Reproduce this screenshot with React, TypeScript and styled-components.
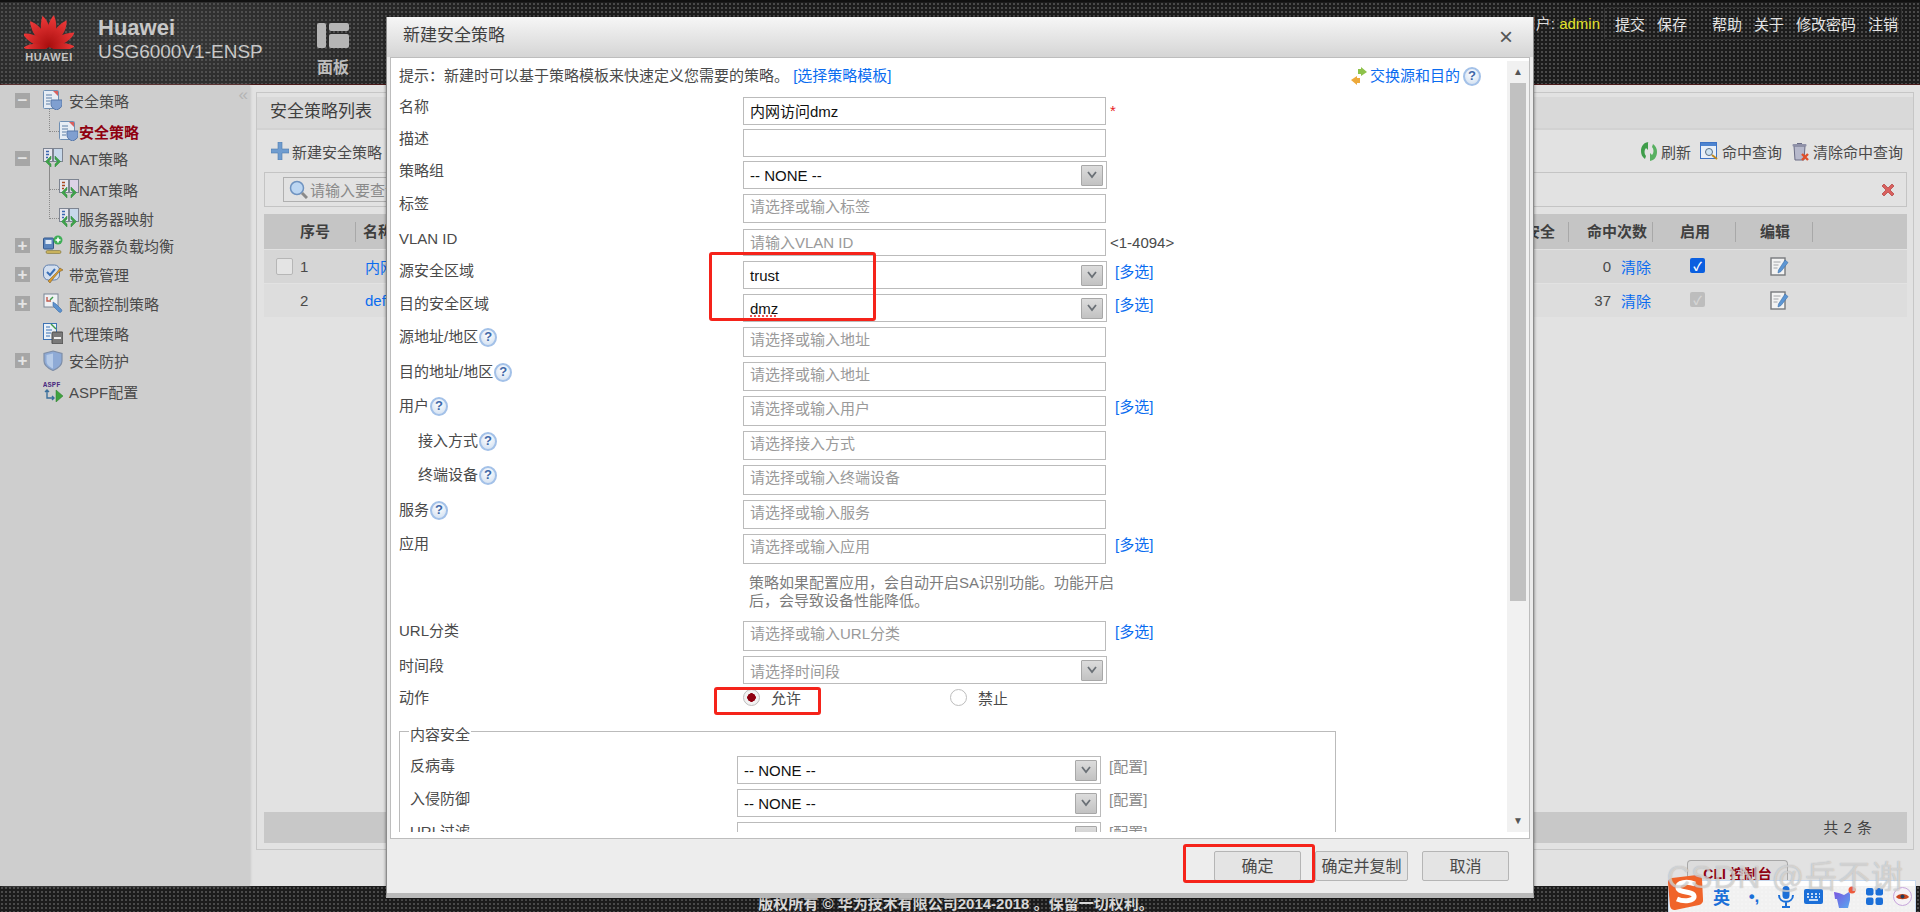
import React from 'react'
import { createGlobalStyle, styled } from 'styled-components'

const FONT = `"Liberation Sans", "Noto Sans CJK SC", sans-serif`

const GlobalStyle = createGlobalStyle`
  html, body {
    margin: 0;
    padding: 0;
    height: 912px;
    overflow: hidden;
    font-family: ${FONT};
    font-size: 15px;
    color: #4a4a4a;
  }
  * { box-sizing: border-box; }
`

/* Icons */
function HuaweiPetals() {
  const petals = [
    { r: -10, s: 1 }, { r: 10, s: 1 },
    { r: -35, s: 1 }, { r: 35, s: 1 },
    { r: -62, s: 0.92 }, { r: 62, s: 0.92 },
    { r: -90, s: 0.8 }, { r: 90, s: 0.8 },
  ]
  return (
    <svg width="50" height="38" viewBox="-25 -36 50 38">
      <defs>
        <linearGradient id="petal" x1="0" y1="0" x2="0" y2="1">
          <stop offset="0" stopColor="#ee3a3a" />
          <stop offset="1" stopColor="#a80d0d" />
        </linearGradient>
      </defs>
      {petals.map((p, i) => (
        <path
          key={i}
          transform={`rotate(${p.r}) scale(${p.s})`}
          d="M0 0 C-6 -8 -7 -20 -1 -32 C6 -24 5 -8 0 0Z"
          fill="url(#petal)"
        />
      ))}
    </svg>
  )
}

function PanelIcon() {
  return (
    <svg width="32" height="25" viewBox="0 0 32 25">
      <rect x="0" y="0" width="9" height="25" rx="2" fill="#b5b5b5" />
      <rect x="12" y="0" width="20" height="8" rx="2" fill="#b5b5b5" />
      <rect x="12" y="11" width="20" height="14" rx="2" fill="#b5b5b5" />
    </svg>
  )
}

function PolicyIcon() {
  return (
    <svg width="19" height="20" viewBox="0 0 19 20">
      <rect x="0.5" y="0.5" width="15" height="18" rx="1" fill="#e6edf5" stroke="#6f8fb3" />
      <path d="M10 1h5v5z" fill="#d9605e" />
      <path d="M3 5h6M3 8h6M3 11h4M3 14h4" stroke="#5d7fa6" />
      <path d="M8 10h11v4.500c0 3-3 4.500-5.500 5.500C11 19 8 17.500 8 14.500z" fill="#7f9fd0" stroke="#5878a8" />
    </svg>
  )
}

function NatIcon({ tag, tint }: { tag?: string; tint?: string }) {
  return (
    <svg width="20" height="20" viewBox="0 0 20 20">
      <rect x="0.5" y="0.5" width="9" height="13" fill="#e6e6ee" stroke="#7d8491" />
      <rect x="10.500" y="0.5" width="9" height="13" fill={tint ?? '#c7d8ea'} stroke="#7d8491" />
      <path d="M3 3.500h3M3 6.500h3M3 9.500h2" stroke={tag === 'S' ? '#a84a20' : '#3a66b0'} strokeWidth="1.400" />
      <path d="M8 8l-5.500 5.500L8 19v-3l-2.500-2.500L8 11zM12 8l5.500 5.500L12 19v-3l2.500-2.500L12 11z" fill="#3ea34a" stroke="#2f8a3a" strokeWidth="0.5" />
    </svg>
  )
}

function BalanceIcon() {
  return (
    <svg width="20" height="20" viewBox="0 0 20 20">
      <rect x="0.500" y="3" width="10" height="11" rx="1" fill="#5a84bc" stroke="#33578a" />
      <rect x="2.500" y="5" width="6" height="4" fill="#dfe9f5" />
      <circle cx="15" cy="5" r="4.500" fill="#3fae56" />
      <path d="M15 2.500v5M12.500 5h5" stroke="#fff" strokeWidth="1.600" />
      <rect x="3" y="15.500" width="15" height="3" rx="1.500" fill="#c9b25c" stroke="#7c7038" strokeWidth="0.6" />
    </svg>
  )
}

function BandwidthIcon() {
  return (
    <svg width="20" height="20" viewBox="0 0 20 20">
      <rect x="0.500" y="1" width="16" height="15" rx="5" fill="#d3dfef" stroke="#5f7fae" />
      <path d="M4 8l3 3 5-6" stroke="#3a70b8" strokeWidth="2" fill="none" />
      <path d="M17 4l3 2-4 2-6 7-3 4-2-2 3-3 6-6z" fill="#d89a30" stroke="#6e5520" strokeWidth="0.5" />
    </svg>
  )
}

function QuotaIcon() {
  return (
    <svg width="20" height="20" viewBox="0 0 20 20">
      <rect x="1" y="1" width="14" height="13" fill="#eff1f4" stroke="#7a8696" />
      <path d="M4 4v4h4" stroke="#c25a4c" strokeWidth="1.400" fill="none" />
      <path d="M7 7l3-3" stroke="#3f9a4a" strokeWidth="1.400" />
      <path d="M10 9l3 2 5 5a1.500 1.500 0 0 1-2 3l-6-6z" fill="#5d93cf" stroke="#3a6ca8" strokeWidth="0.6" />
    </svg>
  )
}

function ProxyIcon() {
  return (
    <svg width="20" height="21" viewBox="0 0 20 21">
      <rect x="0.500" y="0.500" width="13" height="16" fill="#eaf1f8" stroke="#3d73b4" />
      <path d="M3 4h4M3 7h6M3 10h5M3 13h4" stroke="#3d73b4" />
      <path d="M8 1l5 5" stroke="#3f9a4a" strokeWidth="1.400" />
      <rect x="9" y="9" width="11" height="12" rx="1" fill="#7a7a7a" stroke="#4a4a4a" />
      <rect x="11" y="14" width="7" height="2" fill="#eee" />
    </svg>
  )
}

function ShieldIcon() {
  return (
    <svg width="20" height="21" viewBox="0 0 20 21">
      <path d="M10 1l9 2.500V11c0 5-4.500 7.500-9 9.500-4.500-2-9-4.500-9-9.500V3.500z" fill="#8eaad6" stroke="#7f8fa8" strokeWidth="1.200" />
      <path d="M10 3.500v15C7 17 3.500 15 3.500 11V5z" fill="#b6cbe8" />
    </svg>
  )
}

function AspfIcon() {
  return (
    <svg width="20" height="21" viewBox="0 0 20 21">
      <text x="0" y="6" fontSize="7" fontWeight="700" letterSpacing="0.2" fill="#4b2b80" fontFamily="Liberation Mono, monospace">ASPF</text>
      <path d="M4 9v8h7M2 11l2-2 2 2M9 15l2 2-2 2" stroke="#3a6f9c" strokeWidth="1.400" fill="none" />
      <path d="M13 9l7 6-7 6z" fill="#3fa23f" stroke="#2c7c2c" strokeWidth="0.5" />
    </svg>
  )
}

function HelpIcon() {
  return <HelpDot>?</HelpDot>
}

function PlusIcon() {
  return (
    <svg width="18" height="18" viewBox="0 0 18 18">
      <path d="M7 0h4v7h7v4h-7v7H7v-7H0V7h7z" fill="#6f9ccf" stroke="#4f7cae" strokeWidth="0.6" />
    </svg>
  )
}

function RefreshIcon() {
  return (
    <svg width="18" height="19" viewBox="0 0 18 19">
      <path d="M9 0C4 0 1 4 1 9c0 3 1 6 4 8l1-3c-2-2-2-6 0-8l2 2V0z" fill="#3f9d4a" />
      <path d="M9 19c5 0 8-4 8-9 0-3-1-6-4-8l-1 3c2 2 2 6 0 8l-2-2v8z" fill="#57b060" />
    </svg>
  )
}

function HitIcon() {
  return (
    <svg width="19" height="18" viewBox="0 0 19 18">
      <rect x="0.500" y="0.500" width="16" height="16" fill="#e8eff8" stroke="#3d73c4" />
      <rect x="1" y="1" width="15" height="3" fill="#4d84d0" />
      <circle cx="9" cy="10" r="3.500" fill="#cfe4f3" stroke="#5a6d80" />
      <path d="M12 13l5 4" stroke="#c08a20" strokeWidth="2" />
    </svg>
  )
}

function TrashIcon() {
  return (
    <svg width="19" height="19" viewBox="0 0 19 19">
      <path d="M3 4h11l-1 14H4z" fill="#b7b9cc" stroke="#6a6c85" />
      <rect x="1.500" y="2" width="14" height="2.500" rx="1" fill="#8f91a8" />
      <path d="M6 1h5v1H6z" fill="#6a6c85" />
      <path d="M11 12l6 6M17 12l-6 6" stroke="#e0502a" strokeWidth="2.400" />
    </svg>
  )
}

function RedCross() {
  return (
    <svg width="16" height="16" viewBox="0 0 16 16">
      <path d="M2 4l2-2 4 4 4-4 2 2-4 4 4 4-2 2-4-4-4 4-2-2 4-4z" fill="#d9605e" stroke="#b84a48" strokeWidth="0.8" />
    </svg>
  )
}

function EditIcon() {
  return (
    <svg width="19" height="19" viewBox="0 0 19 19">
      <rect x="1" y="1" width="14" height="17" fill="#f3f3f3" stroke="#77797d" strokeWidth="1.400" />
      <path d="M3.500 5h7M3.500 8h5M3.500 11h4" stroke="#a2a4a8" />
      <path d="M15 3l3 2.500-7 9-3 1.500.500-3z" fill="#5c96d4" stroke="#3a6ea8" strokeWidth="0.6" />
    </svg>
  )
}

function SwapIcon() {
  return (
    <svg width="18" height="18" viewBox="0 0 18 18">
      <path d="M8 2h3V0l6 5-6 4V7H8z" fill="#8ec24a" />
      <path d="M10 11H7V9l-6 4 6 5v-2h3z" fill="#eda93a" />
    </svg>
  )
}

function ChevronIcon() {
  return (
    <svg width="10" height="8" viewBox="0 0 10 8">
      <path d="M1 1l4 5 4-5" fill="none" stroke="#6a7076" strokeWidth="1.800" />
    </svg>
  )
}

function SearchGlass() {
  return (
    <svg width="19" height="19" viewBox="0 0 19 19">
      <circle cx="8" cy="8" r="6.500" fill="#bcd6f2" stroke="#6f93c0" strokeWidth="1.500" />
      <path d="M13 13l5 5" stroke="#8a8a8a" strokeWidth="3" />
    </svg>
  )
}

function SogouLogo() {
  return (
    <svg width="36" height="35" viewBox="0 0 36 35">
      <path d="M1 8a5 5 0 0 1 4-5l25-3a5 5 0 0 1 5 4l1 20a5 5 0 0 1-4 6L8 35a5 5 0 0 1-5-4z" fill="#f0642a" />
      <path d="M28 9c-8-3-18-2-17 4 1 5 15 3 16 8 1 5-10 6-17 3" fill="none" stroke="#fff" strokeWidth="5" />
    </svg>
  )
}

function MicIcon() {
  return (
    <svg width="16" height="22" viewBox="0 0 16 22">
      <rect x="4.500" y="0" width="7" height="13" rx="3.500" fill="#1b6fd8" />
      <path d="M1 9c0 9 14 9 14 0M8 16v5M4 21h8" fill="none" stroke="#1b6fd8" strokeWidth="2" />
    </svg>
  )
}

function KeyboardIcon() {
  return (
    <svg width="19" height="15" viewBox="0 0 19 15">
      <rect x="0" y="0" width="19" height="15" rx="2" fill="#1b6fd8" />
      <path d="M3 5h2M7 5h2M11 5h2M15 5h1M3 8h2M7 8h2M11 8h2M15 8h1M5 11h9" stroke="#fff" strokeWidth="1.400" />
    </svg>
  )
}

function ShirtIcon() {
  return (
    <svg width="23" height="22" viewBox="0 0 23 22">
      <defs>
        <linearGradient id="shirt" x1="0" y1="0" x2="1" y2="1">
          <stop offset="0" stopColor="#7a55e0" />
          <stop offset="1" stopColor="#58a8f0" />
        </linearGradient>
      </defs>
      <path d="M1 6l5 1 5 2 5-3 1 2v6l-2 8H6L4 13H2z" fill="url(#shirt)" />
      <circle cx="19" cy="4" r="3.500" fill="#ef5a3c" />
    </svg>
  )
}

function TilesIcon() {
  return (
    <svg width="17" height="17" viewBox="0 0 17 17" fill="#1b6fd8">
      <rect x="0" y="0" width="7.500" height="7.500" rx="2" />
      <rect x="9.500" y="0" width="7.500" height="7.500" rx="2" />
      <rect x="0" y="9.500" width="7.500" height="7.500" rx="2" />
      <rect x="9.500" y="9.500" width="7.500" height="7.500" rx="2" />
    </svg>
  )
}

function AvatarIcon() {
  return (
    <svg width="19" height="19" viewBox="0 0 19 19">
      <circle cx="9.500" cy="9.500" r="9" fill="#f6f2f6" stroke="#c7a6dc" />
      <path d="M3 10c2-4 11-4 13 0-2 3-11 3-13 0z" fill="#c8461e" />
      <circle cx="9.500" cy="9.500" r="2" fill="#283a55" />
    </svg>
  )
}

/* Data */
const treeRows = [
  { id: 1, label: '安全策略', icon: <PolicyIcon />, box: '−', mt: 0 },
  { id: 2, label: '安全策略', icon: <PolicyIcon />, child: true, active: true, mt: 2, tall: 22 },
  { id: 3, label: 'NAT策略', icon: <NatIcon />, box: '−', mt: -2 },
  { id: 4, label: 'NAT策略', icon: <NatIcon tag="S" tint="#dcd2e6" />, child: true, mt: 2, tall: 22 },
  { id: 5, label: '服务器映射', icon: <NatIcon />, child: true, mt: 0, tall: 52 },
  { id: 6, label: '服务器负载均衡', icon: <BalanceIcon />, box: '+', mt: -2 },
  { id: 7, label: '带宽管理', icon: <BandwidthIcon />, box: '+', mt: 0 },
  { id: 8, label: '配额控制策略', icon: <QuotaIcon />, box: '+', mt: 0 },
  { id: 9, label: '代理策略', icon: <ProxyIcon />, mt: 1 },
  { id: 10, label: '安全防护', icon: <ShieldIcon />, box: '+', mt: -2 },
  { id: 11, label: 'ASPF配置', icon: <AspfIcon />, mt: 2 },
]

const placeholderFields = [
  { id: 'src', label: '源地址/地区', ph: '请选择或输入地址', h: 30, gap: 5, help: true },
  { id: 'dst', label: '目的地址/地区', ph: '请选择或输入地址', h: 29, gap: 5, help: true },
  { id: 'user', label: '用户', ph: '请选择或输入用户', h: 30, gap: 5, help: true, multi: true },
  { id: 'access', label: '接入方式', ph: '请选择接入方式', h: 29, gap: 5, help: true, nested: true },
  { id: 'device', label: '终端设备', ph: '请选择或输入终端设备', h: 30, gap: 5, help: true, nested: true },
  { id: 'service', label: '服务', ph: '请选择或输入服务', h: 29, gap: 5, help: true },
  { id: 'app', label: '应用', ph: '请选择或输入应用', h: 30, gap: 10, multi: true },
]

export default function App() {
  return (
    <Page>
      <GlobalStyle />
      <Header>
        <Brand>
          <LogoMark>
            <HuaweiPetals />
            <LogoWord>HUAWEI</LogoWord>
          </LogoMark>
          <ProductName>
            <strong>Huawei</strong>
            <span>USG6000V1-ENSP</span>
          </ProductName>
          <NavTile>
            <PanelIcon />
            <span>面板</span>
          </NavTile>
        </Brand>
        <UserArea>
          <span>
            用户: <AdminName>admin</AdminName>
          </span>
          <ActionBox>
            <HeadLink>提交</HeadLink>
            <HeadLink>保存</HeadLink>
            <HeadLink $gap={25}>帮助</HeadLink>
            <HeadLink>关于</HeadLink>
            <HeadLink>修改密码</HeadLink>
            <HeadLink>注销</HeadLink>
          </ActionBox>
        </UserArea>
      </Header>

      <Workspace>
        <Sidebar>
          <CollapseMark>«</CollapseMark>
          {treeRows.map((row) => (
            <TreeRow key={row.id} $child={row.child} $mt={row.mt} $tall={row.tall}>
              {!row.child && <TreeBox $empty={!row.box}>{row.box}</TreeBox>}
              <TreeIcon $child={row.child}>{row.icon}</TreeIcon>
              <TreeLabel $active={row.active}>{row.label}</TreeLabel>
            </TreeRow>
          ))}
        </Sidebar>

        <Main>
          <Panel>
            <PanelTitle>安全策略列表</PanelTitle>
            <Toolbar>
              <ToolItem>
                <PlusIcon />
                新建安全策略
              </ToolItem>
              <ToolGroup>
                <ToolItem>
                  <RefreshIcon />
                  刷新
                </ToolItem>
                <ToolItem>
                  <HitIcon />
                  命中查询
                </ToolItem>
                <ToolItem>
                  <TrashIcon />
                  清除命中查询
                </ToolItem>
              </ToolGroup>
            </Toolbar>
            <SearchBar>
              <SearchInput>
                <SearchGlass />
                请输入要查询的内容
              </SearchInput>
              <RedCross />
            </SearchBar>
            <TableHead>
              <HeadCell $pl={36}>序号</HeadCell>
              <HeadCell $pl={7}>名称</HeadCell>
              <HeadCell $pl={14}>内容安全</HeadCell>
              <HeadCell $pl={18}>命中次数</HeadCell>
              <HeadCell $pl={27}>启用</HeadCell>
              <HeadCell $pl={24}>编辑</HeadCell>
              <HeadCell $pl={0} $last />
            </TableHead>
            <TableRow>
              <RowCell $pl={12}>
                <RowCheck />1
              </RowCell>
              <RowCell $pl={9}>
                <BlueLink>内网访问dmz</BlueLink>
              </RowCell>
              <RowCell $pl={0} />
              <HitCell>
                0<BlueLink>清除</BlueLink>
              </HitCell>
              <RowCell $pl={37}>
                <EnableBox $on>✓</EnableBox>
              </RowCell>
              <RowCell $pl={34}>
                <EditIcon />
              </RowCell>
              <RowCell $pl={0} />
            </TableRow>
            <TableRow>
              <RowCell $pl={36}>2</RowCell>
              <RowCell $pl={9}>
                <BlueLink>default</BlueLink>
              </RowCell>
              <RowCell $pl={0} />
              <HitCell>
                37<BlueLink>清除</BlueLink>
              </HitCell>
              <RowCell $pl={37}>
                <EnableBox>✓</EnableBox>
              </RowCell>
              <RowCell $pl={34}>
                <EditIcon />
              </RowCell>
              <RowCell $pl={0} />
            </TableRow>
            <Spacer />
            <PagerBand>共 2 条</PagerBand>
          </Panel>
          <ConsoleRow>
            <ConsoleButton>CLI 控制台</ConsoleButton>
          </ConsoleRow>
        </Main>
      </Workspace>

      <FooterBar>
        <FooterText>版权所有 © 华为技术有限公司2014-2018 。保留一切权利。</FooterText>
      </FooterBar>

      <Modal>
        <ModalTitle>
          新建安全策略
          <CloseGlyph>×</CloseGlyph>
        </ModalTitle>
        <ModalBody>
          <FormPane>
            <HintRow>
              <span>
                提示：新建时可以基于策略模板来快速定义您需要的策略。
                <BlueLink>&nbsp;[选择策略模板]</BlueLink>
              </span>
              <SwapLink>
                <SwapIcon />
                <BlueLink>交换源和目的</BlueLink>
                <HelpIcon />
              </SwapLink>
            </HintRow>

            <FormRow $h={28} $gap={4}>
              <FieldLabel>名称</FieldLabel>
              <TextField defaultValue="内网访问dmz" $value />
              <Required>*</Required>
            </FormRow>
            <FormRow $h={28} $gap={4}>
              <FieldLabel>描述</FieldLabel>
              <TextField />
            </FormRow>
            <FormRow $h={28} $gap={5}>
              <FieldLabel>策略组</FieldLabel>
              <SelectField>
                <SelectValue>-- NONE --</SelectValue>
                <SelectArrow>
                  <ChevronIcon />
                </SelectArrow>
              </SelectField>
            </FormRow>
            <FormRow $h={29} $gap={6}>
              <FieldLabel>标签</FieldLabel>
              <TextField placeholder="请选择或输入标签" $top />
            </FormRow>
            <FormRow $h={27} $gap={5}>
              <FieldLabel>VLAN ID</FieldLabel>
              <TextField placeholder="请输入VLAN ID" />
              <RangeNote>&lt;1-4094&gt;</RangeNote>
            </FormRow>
            <FormRow $h={28} $gap={5}>
              <FieldLabel>源安全区域</FieldLabel>
              <SelectField>
                <SelectValue>trust</SelectValue>
                <SelectArrow>
                  <ChevronIcon />
                </SelectArrow>
              </SelectField>
              <MultiLink>[多选]</MultiLink>
            </FormRow>
            <FormRow $h={28} $gap={5}>
              <FieldLabel>目的安全区域</FieldLabel>
              <SelectField>
                <SelectValue>
                  <SpellMark>dmz</SpellMark>
                </SelectValue>
                <SelectArrow>
                  <ChevronIcon />
                </SelectArrow>
              </SelectField>
              <MultiLink>[多选]</MultiLink>
            </FormRow>

            {placeholderFields.map((field) => (
              <FormRow key={field.id} $h={field.h} $gap={field.gap}>
                <FieldLabel $nested={field.nested}>
                  {field.label}
                  {field.help && <HelpIcon />}
                </FieldLabel>
                <TextField placeholder={field.ph} $top />
                {field.multi && <MultiLink>[多选]</MultiLink>}
              </FormRow>
            ))}

            <HelpNote>策略如果配置应用，会自动开启SA识别功能。功能开启后，会导致设备性能降低。</HelpNote>

            <FormRow $h={30} $gap={5}>
              <FieldLabel>URL分类</FieldLabel>
              <TextField placeholder="请选择或输入URL分类" $top />
              <MultiLink>[多选]</MultiLink>
            </FormRow>
            <FormRow $h={28} $gap={3}>
              <FieldLabel>时间段</FieldLabel>
              <SelectField>
                <SelectValue $muted>请选择时间段</SelectValue>
                <SelectArrow>
                  <ChevronIcon />
                </SelectArrow>
              </SelectField>
            </FormRow>
            <ActionRow>
              <FieldLabel>动作</FieldLabel>
              <RadioGroup>
                <RadioOption>
                  <RadioDot $on />
                  允许
                </RadioOption>
                <RadioOption>
                  <RadioDot />
                  禁止
                </RadioOption>
              </RadioGroup>
            </ActionRow>

            <ContentSet>
              <SetLegend>内容安全</SetLegend>
              {['反病毒', '入侵防御', 'URL过滤'].map((name) => (
                <SetRow key={name}>
                  <FieldLabel>{name}</FieldLabel>
                  <SelectField>
                    <SelectValue>-- NONE --</SelectValue>
                    <SelectArrow>
                      <ChevronIcon />
                    </SelectArrow>
                  </SelectField>
                  <ConfigLink>[配置]</ConfigLink>
                </SetRow>
              ))}
            </ContentSet>
          </FormPane>
          <ScrollTrack>
            <ScrollArrow>▲</ScrollArrow>
            <ScrollThumb />
            <ScrollArrow $down>▼</ScrollArrow>
          </ScrollTrack>
        </ModalBody>
        <ModalFooter>
          <FooterButton $w={87}>确定</FooterButton>
          <FooterButton $w={93}>确定并复制</FooterButton>
          <FooterButton $w={87}>取消</FooterButton>
        </ModalFooter>
      </Modal>

      {/* red marks drawn over the screenshot */}
      <RedMark $x={709} $y={252} $w={167} $h={69} />
      <RedMark $x={714} $y={687} $w={107} $h={28} />
      <RedMark $x={1183} $y={844} $w={132} $h={39} />

      <ImeBar>
        <ImeLogo>
          <SogouLogo />
        </ImeLogo>
        <ImeGlyph>英</ImeGlyph>
        <ImePunct>•,</ImePunct>
        <MicIcon />
        <KeyboardIcon />
        <ShirtIcon />
        <TilesIcon />
        <AvatarIcon />
      </ImeBar>
      <Watermark>CSDN @岳不谢</Watermark>
    </Page>
  )
}

/* Styled Components */
const Page = styled.div`
  position: relative;
  width: 1920px;
  height: 912px;
  overflow: hidden;
  display: flex;
  flex-direction: column;
  background: #e2e2e2;
`

const dots = `
  radial-gradient(circle at 2px 2px, #4a4a4a 1.1px, transparent 1.5px) 0 0 / 4px 4px,
  #1c1c1c
`

const Header = styled.header`
  height: 85px;
  flex: none;
  display: flex;
  justify-content: space-between;
  border-top: 2px solid #111;
  border-bottom: 1px solid #4a1a1a;
  background:
    radial-gradient(ellipse 420px 120px at 150px 40px, rgba(90, 90, 90, 0.45), transparent),
    ${dots};
`

const Brand = styled.div`
  display: flex;
  align-items: flex-start;
`

const LogoMark = styled.div`
  margin: 9px 0 0 23px;
  width: 52px;
  display: flex;
  flex-direction: column;
  align-items: center;
`

const LogoWord = styled.div`
  margin-top: 2px;
  font-size: 11px;
  font-weight: 700;
  letter-spacing: 0.6px;
  color: #c4c4c4;
`

const ProductName = styled.div`
  margin: 13px 0 0 23px;
  width: 219px;
  display: flex;
  flex-direction: column;
  color: #c8c8c8;
  strong {
    font-size: 22px;
    line-height: 25px;
  }
  span {
    font-size: 19px;
    line-height: 24px;
  }
`

const NavTile = styled.div`
  margin-top: 21px;
  display: flex;
  flex-direction: column;
  align-items: center;
  gap: 6px;
  font-size: 16px;
  font-weight: 700;
  color: #bdbdbd;
`

const UserArea = styled.div`
  display: flex;
  align-items: flex-start;
  gap: 4px;
  padding: 5px 18px 0 0;
  color: #dcdcdc;
  font-size: 15px;
  > span {
    line-height: 33px;
  }
`

const AdminName = styled.span`
  color: #e2e22a;
`

const ActionBox = styled.div`
  height: 33px;
  width: 298px;
  padding-left: 10px;
  display: flex;
  align-items: center;
  border: 1px solid #333;
  border-radius: 2px;
`

const HeadLink = styled.span<{ $gap?: number }>`
  margin-left: ${(p) => p.$gap ?? 12}px;
  color: #e4e4e4;
  &:first-child {
    margin-left: 0;
  }
`

const Workspace = styled.div`
  flex: 1;
  min-height: 0;
  display: flex;
`

const Sidebar = styled.aside`
  position: relative;
  width: 250px;
  flex: none;
  padding-top: 1px;
  background: #cecece;
  box-shadow: 1px 0 3px -1px #b9b9b9;
`

const CollapseMark = styled.div`
  position: absolute;
  top: 0;
  right: 2px;
  font-size: 17px;
  line-height: 20px;
  color: #b4b4b4;
`

const TreeRow = styled.div<{ $child?: boolean; $mt: number; $tall?: number }>`
  position: relative;
  height: 29px;
  margin-top: ${(p) => p.$mt}px;
  padding-left: ${(p) => (p.$child ? 59 : 15)}px;
  display: flex;
  align-items: center;
  ${(p) =>
    p.$child &&
    `&::before {
      content: '';
      position: absolute;
      left: 49px;
      bottom: 14px;
      width: 9px;
      height: ${p.$tall}px;
      border-left: 1px dotted #8a8a8a;
      border-bottom: 1px dotted #8a8a8a;
    }`}
`

const TreeBox = styled.span<{ $empty?: boolean }>`
  width: 15px;
  height: 15px;
  margin-right: 13px;
  display: flex;
  align-items: center;
  justify-content: center;
  font-size: 17px;
  font-weight: 700;
  line-height: 1;
  color: #e4e4e4;
  background: ${(p) => (p.$empty ? 'transparent' : '#a6a6a6')};
`

const TreeIcon = styled.span<{ $child?: boolean }>`
  width: 20px;
  height: 21px;
  margin-right: ${(p) => (p.$child ? 0 : 6)}px;
  display: flex;
`

const TreeLabel = styled.span<{ $active?: boolean }>`
  color: ${(p) => (p.$active ? '#8f0010' : '#4a4a4a')};
  font-weight: ${(p) => (p.$active ? 700 : 400)};
`

const Main = styled.main`
  flex: 1;
  min-width: 0;
  padding: 7px 6px 0;
  display: flex;
  flex-direction: column;
`

const Panel = styled.section`
  height: 758px;
  flex: none;
  display: flex;
  flex-direction: column;
  border: 1px solid #c6c6c6;
`

const PanelTitle = styled.h2`
  margin: 4px 0 0;
  height: 33px;
  padding-left: 13px;
  font-size: 17px;
  line-height: 30px;
  font-weight: 400;
  color: #3f3f3f;
  background: #d9d9d9;
  border-bottom: 2px solid #d2d2d2;
`

const Toolbar = styled.div`
  height: 42px;
  flex: none;
  padding: 0 10px 0 14px;
  display: flex;
  align-items: center;
  justify-content: space-between;
`

const ToolGroup = styled.div`
  display: flex;
  gap: 9px;
`

const ToolItem = styled.span`
  display: flex;
  align-items: center;
  gap: 3px;
  color: #4a4a4a;
`

const SearchBar = styled.div`
  height: 35px;
  flex: none;
  margin: 0 6px 0 7px;
  padding: 0 10px 0 18px;
  display: flex;
  align-items: center;
  justify-content: space-between;
  border: 1px solid #c4c4c4;
`

const SearchInput = styled.div`
  width: 320px;
  height: 25px;
  padding-left: 5px;
  display: flex;
  align-items: center;
  gap: 2px;
  color: #8a8a8a;
  border: 1px solid #b0b0b0;
`

const tableColumns = 'grid-template-columns: 92px 1125px 88px 84px 83px 77px 94px;'

const TableHead = styled.div`
  height: 35px;
  flex: none;
  margin: 7px 6px 0 7px;
  display: grid;
  ${tableColumns}
  align-items: center;
  background: #c5c5c5;
`

const HeadCell = styled.div<{ $pl: number; $last?: boolean }>`
  height: 20px;
  padding-left: ${(p) => p.$pl}px;
  font-weight: 700;
  line-height: 20px;
  color: #3f3f3f;
  border-right: ${(p) => (p.$last ? 'none' : '1px solid #a8a8a8')};
`

const TableRow = styled.div`
  height: 33px;
  flex: none;
  margin: 1px 6px 0 7px;
  display: grid;
  ${tableColumns}
  align-items: center;
  background: #d6d6d6;
  & + & {
    background: #dddddd;
  }
`

const RowCell = styled.div<{ $pl: number }>`
  padding-left: ${(p) => p.$pl}px;
  display: flex;
  align-items: center;
`

const HitCell = styled.div`
  padding-right: 2px;
  display: flex;
  align-items: center;
  justify-content: flex-end;
  gap: 10px;
`

const RowCheck = styled.span`
  width: 17px;
  height: 17px;
  margin-right: 7px;
  border: 1px solid #b6b6b6;
  border-radius: 2px;
  background: #e4e4e4;
`

const EnableBox = styled.span<{ $on?: boolean }>`
  width: 15px;
  height: 15px;
  margin-bottom: 2px;
  border-radius: 2px;
  display: flex;
  align-items: center;
  justify-content: center;
  font-size: 12px;
  font-weight: 700;
  color: ${(p) => (p.$on ? '#fff' : '#d6d6d6')};
  background: ${(p) => (p.$on ? '#0a5fe0' : '#bdbdbd')};
`

const BlueLink = styled.span`
  color: #0a6cf0;
`

const Spacer = styled.div`
  flex: 1;
`

const PagerBand = styled.div`
  height: 31px;
  flex: none;
  margin: 0 6px 6px 7px;
  padding-right: 35px;
  text-align: right;
  line-height: 31px;
  color: #444;
  word-spacing: 1px;
  background: #c8c8c8;
`

const ConsoleRow = styled.div`
  margin-top: 10px;
  padding-right: 126px;
  display: flex;
  justify-content: flex-end;
`

const ConsoleButton = styled.div`
  width: 101px;
  height: 26px;
  padding-top: 2px;
  text-align: center;
  font-size: 14px;
  font-weight: 700;
  color: #8f0010;
  background: #dcdcdc;
  border: 1px solid #a8a8a8;
  border-bottom: none;
  border-radius: 4px 4px 0 0;
`

const FooterBar = styled.footer`
  height: 26px;
  flex: none;
  overflow: hidden;
  background: ${dots};
`

const FooterText = styled.div`
  margin: 8px 0 0 -8px;
  text-align: center;
  font-size: 15px;
  line-height: 20px;
  font-weight: 700;
  color: #d9d9d9;
`

const Modal = styled.div`
  position: absolute;
  left: 386px;
  top: 17px;
  width: 1148px;
  height: 881px;
  display: flex;
  flex-direction: column;
  background: #ececec;
  border-left: 1px solid #8c8c8c;
  border-right: 1px solid #8c8c8c;
  border-bottom: 5px solid #b9b9b9;
  box-shadow: 0 0 3px rgba(0, 0, 0, 0.5);
`

const ModalTitle = styled.div`
  position: relative;
  height: 40px;
  flex: none;
  padding-left: 16px;
  font-size: 17px;
  line-height: 38px;
  color: #3f3f3f;
  background: linear-gradient(#f6f6f6, #d5d5d5);
`

const CloseGlyph = styled.span`
  position: absolute;
  right: 20px;
  top: 2px;
  font-size: 24px;
  line-height: 36px;
  color: #555;
`

const ModalBody = styled.div`
  flex: 1;
  min-height: 0;
  margin: 0 3px;
  padding: 3px 0 6px;
  display: flex;
  background: #fff;
  border: 1px solid #bdbdbd;
`

const FormPane = styled.div`
  flex: 1;
  min-width: 0;
  padding: 5px 26px 0 8px;
  overflow: hidden;
`

const HintRow = styled.div`
  height: 20px;
  margin-bottom: 11px;
  display: flex;
  justify-content: space-between;
  line-height: 20px;
  color: #4a4a4a;
`

const SwapLink = styled.span`
  display: flex;
  align-items: center;
  gap: 2px;
`

const HelpDot = styled.span`
  width: 18px;
  height: 19px;
  flex: none;
  margin-left: 1px;
  display: inline-flex;
  align-items: center;
  justify-content: center;
  vertical-align: middle;
  font-size: 13px;
  font-weight: 700;
  color: #3f68a8;
  border: 2px solid #a3c1e8;
  border-radius: 50%;
  background: radial-gradient(circle at 50% 35%, #fff, #ccdcef);
`

const FormRow = styled.div<{ $h: number; $gap: number }>`
  height: ${(p) => p.$h}px;
  margin-bottom: ${(p) => p.$gap}px;
  display: grid;
  grid-template-columns: 344px 364px auto;
  align-items: start;
`

const FieldLabel = styled.label<{ $nested?: boolean }>`
  padding-left: ${(p) => (p.$nested ? 19 : 0)}px;
  display: flex;
  align-items: center;
  line-height: 20px;
  color: #4a4a4a;
`

const TextField = styled.input<{ $top?: boolean; $value?: boolean }>`
  width: 363px;
  height: 100%;
  padding: ${(p) => (p.$top ? '0 6px 5px' : p.$value ? '0 6px 2px' : '0 6px')};
  font: inherit;
  color: #111;
  outline: none;
  background: #fff;
  border: 1px solid #bbb;
  border-radius: 0;
  &::placeholder {
    color: #9a9a9a;
    opacity: 1;
  }
`

const SelectField = styled.div`
  height: 28px;
  padding: 0 3px 0 6px;
  display: flex;
  align-items: center;
  justify-content: space-between;
  background: #fff;
  border: 1px solid #bbb;
`

const SelectValue = styled.span<{ $muted?: boolean }>`
  color: ${(p) => (p.$muted ? '#9a9a9a' : '#111')};
`

const SpellMark = styled.span`
  text-decoration: underline dotted #e02020;
  text-underline-offset: 2px;
`

const SelectArrow = styled.span`
  width: 22px;
  height: 21px;
  display: flex;
  align-items: center;
  justify-content: center;
  background: linear-gradient(#dcdcdc, #c2c2c2);
  border: 1px solid #a8a8a8;
  border-radius: 1px;
`

const Required = styled.span`
  padding: 5px 0 0 3px;
  color: #e81c1c;
`

const RangeNote = styled.span`
  padding: 5px 0 0 3px;
  color: #4a4a4a;
`

const MultiLink = styled(BlueLink)`
  padding: 1px 0 0 8px;
  line-height: 20px;
`

const HelpNote = styled.p`
  width: 372px;
  height: 36px;
  margin: 0 0 11px 350px;
  line-height: 18px;
  color: #7c7c7c;
`

const ActionRow = styled.div`
  height: 20px;
  margin-bottom: 24px;
  display: grid;
  grid-template-columns: 344px 1fr;
`

const RadioGroup = styled.div`
  display: flex;
`

const RadioOption = styled.span`
  width: 207px;
  display: flex;
  align-items: center;
  gap: 11px;
  color: #4a4a4a;
`

const RadioDot = styled.span<{ $on?: boolean }>`
  width: 17px;
  height: 17px;
  border: 1px solid #bdbdbd;
  border-radius: 50%;
  background: ${(p) =>
    p.$on ? 'radial-gradient(circle, #8f0010 0 4px, #f2f2f2 4.5px)' : '#fff'};
`

const ContentSet = styled.div`
  position: relative;
  width: 937px;
  padding: 24px 0 0 10px;
  border: 1px solid #bbb;
  border-bottom: none;
`

const SetLegend = styled.span`
  position: absolute;
  left: 9px;
  top: -6px;
  padding: 0 1px;
  line-height: 18px;
  color: #4a4a4a;
  background: #fff;
`

const SetRow = styled.div`
  height: 28px;
  margin-bottom: 5px;
  display: grid;
  grid-template-columns: 327px 364px auto;
  align-items: start;
`

const ConfigLink = styled.span`
  padding: 1px 0 0 8px;
  line-height: 20px;
  color: #8a8a8a;
`

const ScrollTrack = styled.div`
  width: 22px;
  flex: none;
  display: flex;
  flex-direction: column;
  align-items: center;
  background: #f1f1f1;
`

const ScrollArrow = styled.span<{ $down?: boolean }>`
  height: 22px;
  flex: none;
  margin-top: ${(p) => (p.$down ? 'auto' : '0')};
  font-size: 10px;
  line-height: 22px;
  color: #555;
`

const ScrollThumb = styled.div`
  width: 16px;
  height: 518px;
  background: #c1c1c1;
`

const ModalFooter = styled.div`
  height: 54px;
  flex: none;
  padding: 12px 24px 0 0;
  display: flex;
  justify-content: flex-end;
  gap: 14px;
  background: #ededed;
`

const FooterButton = styled.div<{ $w: number }>`
  width: ${(p) => p.$w}px;
  height: 30px;
  text-align: center;
  font-size: 16px;
  line-height: 29px;
  white-space: nowrap;
  color: #4a4a4a;
  background: #e4e4e4;
  border: 1px solid #b5b5b5;
  border-radius: 2px;
`

const RedMark = styled.div<{ $x: number; $y: number; $w: number; $h: number }>`
  position: absolute;
  left: ${(p) => p.$x}px;
  top: ${(p) => p.$y}px;
  width: ${(p) => p.$w}px;
  height: ${(p) => p.$h}px;
  border: 3px solid #f5231a;
  border-radius: 3px;
  pointer-events: none;
`

const Watermark = styled.div`
  position: absolute;
  left: 1667px;
  top: 858px;
  font-size: 32px;
  line-height: 38px;
  letter-spacing: 1px;
  white-space: nowrap;
  color: rgba(255, 255, 255, 0.5);
  text-shadow: 0 0 1px rgba(130, 130, 130, 0.7);
`

const ImeBar = styled.div`
  position: absolute;
  left: 1668px;
  top: 880px;
  width: 248px;
  height: 32px;
  padding-left: 44px;
  display: flex;
  align-items: center;
  gap: 10px;
  background: rgba(255, 255, 255, 0.94);
  border: 1px solid #c6d8ee;
  border-bottom: none;
`

const ImeLogo = styled.div`
  position: absolute;
  left: -2px;
  bottom: -1px;
`

const ImeGlyph = styled.span`
  font-size: 17px;
  font-weight: 700;
  color: #1b6fd8;
`

const ImePunct = styled.span`
  width: 28px;
  font-size: 17px;
  font-weight: 700;
  text-align: center;
  color: #1b6fd8;
`
